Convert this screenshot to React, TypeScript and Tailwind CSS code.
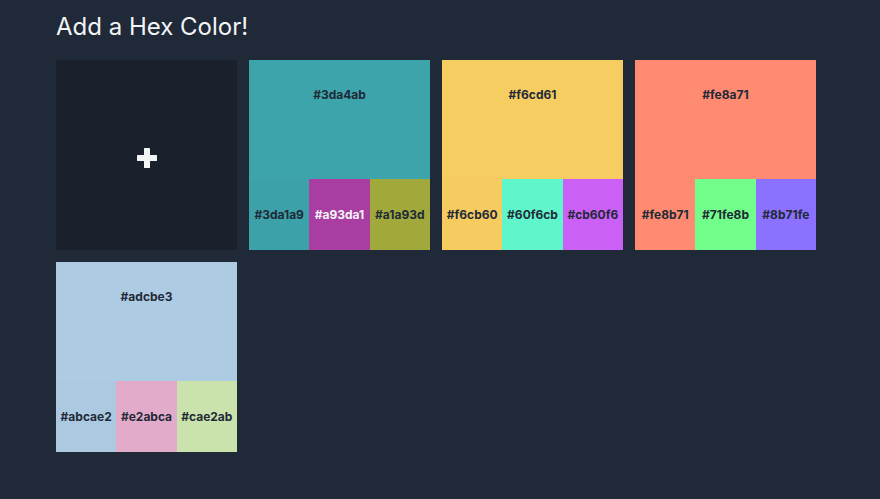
import React from "react";

type Palette = {
    main: string;
    shades: { hex: string; light?: boolean }[];
};

const palettes: Palette[] = [
    {
        main: "#3da4ab",
        shades: [{ hex: "#3da1a9" }, { hex: "#a93da1", light: true }, { hex: "#a1a93d" }],
    },
    {
        main: "#f6cd61",
        shades: [{ hex: "#f6cb60" }, { hex: "#60f6cb" }, { hex: "#cb60f6" }],
    },
    {
        main: "#fe8a71",
        shades: [{ hex: "#fe8b71" }, { hex: "#71fe8b" }, { hex: "#8b71fe" }],
    },
    {
        main: "#adcbe3",
        shades: [{ hex: "#abcae2" }, { hex: "#e2abca" }, { hex: "#cae2ab" }],
    },
];

function AddCard() {
    return (
        <button className="h-[190px] bg-[#1a202c] flex items-center justify-center pt-[6px]">
            <svg width="20" height="20" viewBox="0 0 20 20" fill="#f3f4f6">
                <rect x="7" y="0" width="6" height="20" rx="0.5" />
                <rect x="0" y="7" width="20" height="6" rx="0.5" />
            </svg>
        </button>
    );
}

function ColorCard({ palette }: { palette: Palette }) {
    return (
        <div className="h-[190px] flex flex-col" style={{ backgroundColor: palette.main }}>
            <div className="flex-1 flex justify-center pt-[27px] text-xs font-bold text-[#1f2937]">
                {palette.main}
            </div>
            <div className="h-[71px] grid grid-cols-3">
                {palette.shades.map((shade) => (
                    <div
                        key={shade.hex}
                        className={`flex items-center justify-center text-xs font-bold ${
                            shade.light ? "text-[#f3f4f6]" : "text-[#1f2937]"
                        }`}
                        style={{ backgroundColor: shade.hex }}
                    >
                        {shade.hex}
                    </div>
                ))}
            </div>
        </div>
    );
}

export default function App() {
    return (
        <div className="min-h-[499px] bg-[#1f2937] px-[56px] pt-[11px] font-['Inter',sans-serif]">
            <h1 className="text-2xl leading-8 text-[#f3f4f6] mb-[17px]">Add a Hex Color!</h1>
            <div className="grid grid-cols-[repeat(4,181px)] gap-3">
                <AddCard />
                {palettes.map((p) => (
                    <ColorCard key={p.main} palette={p} />
                ))}
            </div>
        </div>
    );
}
